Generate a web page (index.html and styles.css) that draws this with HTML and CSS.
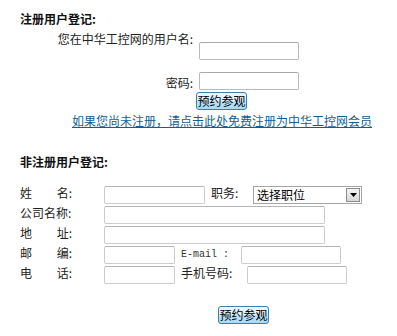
FILE: index.html
```html
<!DOCTYPE html>
<html lang="zh">
<head>
<meta charset="utf-8">
<title>预约参观</title>
<link rel="stylesheet" href="styles.css">
</head>
<body>
<div class="page">
  <h2 class="title">注册用户登记:</h2>
  <div class="login">
    <label class="llab llab-user" for="u">您在中华工控网的用户名:</label>
    <input id="u" class="inp inp-login inp-user" type="text">
    <label class="llab llab-pass" for="p">密码:</label>
    <input id="p" class="inp inp-login inp-pass" type="password">
    <div class="btncell"><button class="btn" type="button">预约参观</button></div>
  </div>
  <a class="reglink" href="#">如果您尚未注册，请点击此处免费注册为中华工控网会员</a>

  <h2 class="title title-2">非注册用户登记:</h2>
  <div class="form">
    <div class="frow">
      <label class="flab"><span>姓</span><span>名:</span></label>
      <input class="inp w-name" type="text">
      <label class="duty">职务:</label>
      <div class="sel">
        <select class="select"><option>选择职位</option></select>
        <span class="sel-arrow"><svg width="7" height="4" viewBox="0 0 7 4"><path d="M0 0H7L3.5 4Z" fill="#000"/></svg></span>
      </div>
    </div>
    <div class="frow">
      <label class="flab"><span>公司名称:</span></label>
      <input class="inp w-long" type="text">
    </div>
    <div class="frow">
      <label class="flab"><span>地</span><span>址:</span></label>
      <input class="inp w-long" type="text">
    </div>
    <div class="frow">
      <label class="flab"><span>邮</span><span>编:</span></label>
      <input class="inp w-short" type="text">
      <label class="email">E-mail :</label>
      <input class="inp w-mid" type="text">
    </div>
    <div class="frow">
      <label class="flab"><span>电</span><span>话:</span></label>
      <input class="inp w-short" type="text">
      <label class="mobile">手机号码:</label>
      <input class="inp w-mid" type="text">
    </div>
  </div>
  <div class="btnrow"><button class="btn" type="button">预约参观</button></div>
</div>
</body>
</html>
```

FILE: styles.css
```css
html, body {
  margin: 0;
  padding: 0;
  background: #fff;
}
.page {
  padding-top: 13px;
  font-family: "Noto Sans CJK SC", "Liberation Sans", sans-serif;
  font-size: 12px;
  line-height: 12px;
  color: #222;
}
.title {
  margin: 0 0 0 20px;
  font-size: 12px;
  line-height: 12px;
  font-weight: bold;
  color: #111;
}
.title-2 {
  margin-top: 29px;
}
.login {
  display: grid;
  grid-template-columns: 193px 100px;
  column-gap: 6px;
  align-items: start;
  margin-top: 8px;
}
.llab {
  text-align: right;
  line-height: 12px;
}
.llab-user {
  grid-row: 1;
  grid-column: 1;
}
.inp-user {
  grid-row: 1;
  grid-column: 2;
}
.llab-pass {
  grid-row: 2;
  grid-column: 1;
  margin-top: 17px;
}
.inp-pass {
  grid-row: 2;
  grid-column: 2;
}
.btncell {
  grid-row: 3;
  grid-column: 1 / 3;
  padding-left: 196px;
  margin-top: 2px;
}
.inp {
  box-sizing: border-box;
  height: 18px;
  margin: 0;
  padding: 0 2px;
  border: 1px solid #cbcbcb;
  border-top-color: #b5b5b5;
  border-radius: 2px;
  background: #fff;
  font: inherit;
}
.inp-login {
  width: 100px;
  border-color: #b9b9b9;
  border-top-color: #a9a9a9;
}
.login .inp-user { margin-top: 9px; }
.login .inp-pass { margin-top: 12px; }
.btnrow {
  display: flex;
  margin-top: 22px;
  padding-left: 218px;
}
.btn {
  box-sizing: border-box;
  width: 51px;
  height: 18px;
  padding: 0;
  border: 1px solid #3c7fb1;
  border-radius: 3px;
  background: linear-gradient(#eaf6fd, #d9f0fc 50%, #bee6fd 51%, #a7d9f5);
  font-family: "Noto Sans CJK SC", sans-serif;
  font-size: 12px;
  line-height: 14px;
  color: #000;
}
.reglink {
  display: inline-block;
  margin: 5px 0 0 72px;
  color: #0f5f94;
  text-decoration: underline;
  line-height: 12px;
}
.form {
  margin-top: 18px;
  display: flex;
  flex-direction: column;
  gap: 2px;
}
.frow {
  display: flex;
  align-items: flex-start;
  height: 18px;
}
.frow > * {
  flex-shrink: 0;
}
.flab {
  width: 52px;
  margin-left: 20px;
  margin-right: 32px;
  display: flex;
  justify-content: space-between;
  line-height: 12px;
  padding-top: 1px;
}
.w-name { width: 101px; }
.w-long { width: 221px; }
.w-short { width: 71px; }
.w-mid { width: 100px; }
.duty {
  margin-left: 6px;
  width: 42px;
  padding-top: 1px;
}
.sel {
  position: relative;
  width: 109px;
  height: 18px;
}
.select {
  -webkit-appearance: none;
  appearance: none;
  box-sizing: border-box;
  width: 109px;
  height: 18px;
  margin: 0;
  padding: 0 0 0 3px;
  border: 1px solid #a5a5a5;
  border-radius: 0;
  background: #fff;
  font-family: "Noto Sans CJK SC", sans-serif;
  font-size: 12px;
  line-height: 16px;
  color: #000;
}
.sel-arrow {
  position: absolute;
  top: 2px;
  right: 2px;
  width: 14px;
  height: 14px;
  box-sizing: border-box;
  border: 1px solid #8c8c8c;
  background: linear-gradient(#f4f4f4, #d6d6d6);
  display: flex;
  align-items: center;
  justify-content: center;
}
.email {
  margin-left: 6px;
  width: 60px;
  font-family: "Liberation Mono", monospace;
  font-size: 10px;
  line-height: 12px;
  padding-top: 3px;
  color: #333;
}
.mobile {
  margin-left: 6px;
  width: 66px;
  padding-top: 1px;
}
```
